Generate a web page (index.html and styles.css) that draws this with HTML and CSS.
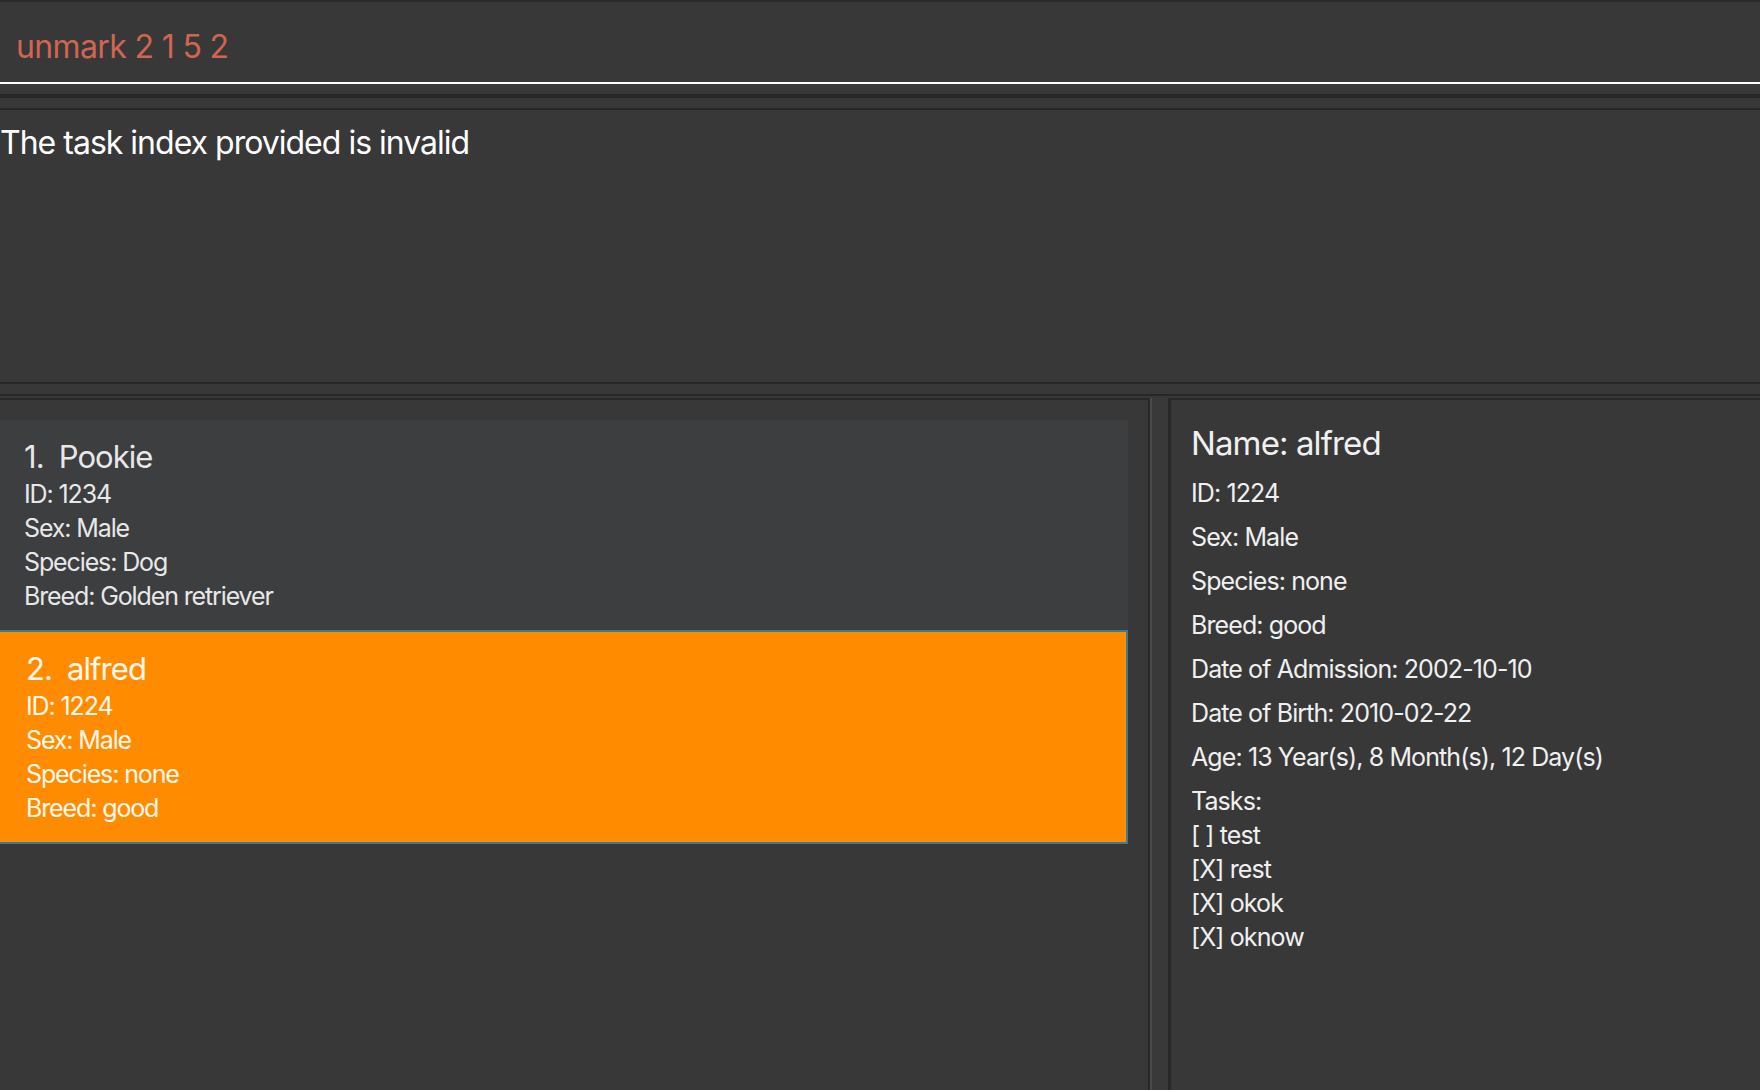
FILE: index.html
```html
<!DOCTYPE html>
<html lang="en">
<head>
<meta charset="utf-8">
<title>Pet Tracker</title>
<link rel="stylesheet" href="styles.css">
</head>
<body>
<div class="app">
  <div class="topline"></div>
  <div class="command"><span class="cmd-text">unmark 2 1 5 2</span></div>
  <div class="result-outer">
    <div class="result">The task index provided is invalid</div>
  </div>
  <div class="split">
    <div class="list-panel">
      <div class="card">
        <div class="card-name"><span class="idx">1.</span>Pookie</div>
        <div class="card-line">ID: 1234</div>
        <div class="card-line">Sex: Male</div>
        <div class="card-line">Species: Dog</div>
        <div class="card-line">Breed: Golden retriever</div>
      </div>
      <div class="card selected">
        <div class="card-name"><span class="idx">2.</span>alfred</div>
        <div class="card-line">ID: 1224</div>
        <div class="card-line">Sex: Male</div>
        <div class="card-line">Species: none</div>
        <div class="card-line">Breed: good</div>
      </div>
    </div>
    <div class="divider"></div>
    <div class="detail-panel">
      <div class="detail-name">Name: alfred</div>
      <div class="detail-row">ID: 1224</div>
      <div class="detail-row">Sex: Male</div>
      <div class="detail-row">Species: none</div>
      <div class="detail-row">Breed: good</div>
      <div class="detail-row">Date of Admission: 2002-10-10</div>
      <div class="detail-row">Date of Birth: 2010-02-22</div>
      <div class="detail-row">Age: 13 Year(s), 8 Month(s), 12 Day(s)</div>
      <div class="tasks">
        <div class="task-line">Tasks:</div>
        <div class="task-line">[ ] test</div>
        <div class="task-line">[X] rest</div>
        <div class="task-line">[X] okok</div>
        <div class="task-line">[X] oknow</div>
      </div>
    </div>
  </div>
</div>
</body>
</html>
```

FILE: styles.css
```css
* { box-sizing: border-box; }
html, body { margin: 0; padding: 0; }
body {
  background: #383838;
  font-family: "Inter", "Noto Sans", sans-serif;
  color: #eeeeee;
  width: 1760px;
  height: 1090px;
  overflow: hidden;
}
.app {
  display: flex;
  flex-direction: column;
  height: 1090px;
}
.topline { height: 2px; background: #2a2a2a; }
.command {
  height: 82px;
  padding: 25px 0 0 16px;
  border-bottom: 2px solid #ffffff;
}
.cmd-text {
  font-size: 32px;
  line-height: 40px;
  letter-spacing: -0.02em;
  color: #d06651;
}
.result-outer {
  margin-top: 10px;
  border-top: 4px solid #282828;
  padding-top: 10px;
}
.result {
  border-top: 2px solid #282828;
  border-bottom: 2px solid #282828;
  height: 276px;
  padding-top: 13px;
  font-size: 32px;
  line-height: 40px;
  letter-spacing: -0.031em;
  color: #ffffff;
}
.split {
  margin-top: 10px;
  border-top: 2px solid #282828;
  padding-top: 2px;
  flex: 1;
  display: flex;
  min-height: 0;
}
.list-panel {
  width: 1150px;
  border-top: 2px solid #282828;
  border-right: 2px solid #282828;
  padding: 20px 20px 0 0;
}
.card {
  height: 210px;
  padding: 17px 0 0 24px;
  background: #3c3e40;
  color: #e8e8e8;
}
.card.selected {
  height: 214px;
  padding: 17px 0 0 26px;
  border: 2px solid #3e7b91;
  border-left: 0;
  background: #ff8c00;
  color: #fff8ee;
}
.card-name {
  font-size: 31px;
  line-height: 40px;
  letter-spacing: -0.03em;
}
.idx { margin-right: 15px; }
.card-line {
  font-size: 25px;
  line-height: 34px;
  letter-spacing: -0.045em;
}
.divider {
  width: 18px;
  border-left: 2px solid #4a4a4a;
  background: #393939;
}
.detail-panel {
  flex: 1;
  border-top: 2px solid #282828;
  border-left: 3px solid #282828;
  padding: 23px 0 0 20px;
  color: #f0f0f0;
}
.detail-name {
  font-size: 33px;
  line-height: 40px;
  letter-spacing: -0.027em;
  margin-bottom: 13px;
}
.detail-row {
  font-size: 25px;
  line-height: 34px;
  letter-spacing: -0.036em;
  margin-bottom: 10px;
}
.task-line {
  font-size: 25px;
  line-height: 34px;
  letter-spacing: -0.036em;
}
```
